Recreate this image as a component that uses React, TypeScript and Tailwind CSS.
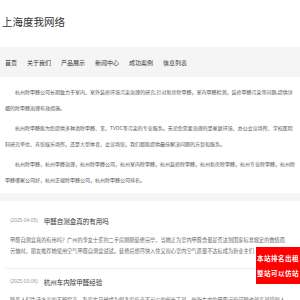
import React from "react";

const cjk = { fontFamily: '"Noto Sans CJK SC", "Noto Sans", sans-serif' };

const navItems = ["首页", "关于我们", "产品展示", "新闻中心", "成功案例", "信息列表"];

const news = [
  {
    date: "(2025-04-05)",
    title: "甲醛自测盒真的有用吗",
    summary:
      "甲醛自测盒真的有用吗？广州的李女士买的二手房刚刚装修完毕，当她正为室内甲醛含量是否达到国家标准规定的数值而苦恼时，朋友推荐她使用空气甲醛自测盒试试。装修后想尽快入住又担心室内空气质量不达标成为新业主们",
  },
  {
    date: "(2025-03-06)",
    title: "杭州车内除甲醛经验",
    summary:
      "随着人们生活水平的不断提高，私家车已经成为很多家庭必不可少的代步工具，但新车内的甲醛污染问题也越来越受到人们的关注。",
  },
];

export default function App() {
  return (
    <div className="w-[300px] min-h-[300px] bg-white text-[#333]" style={cjk}>
      <header className="h-[47px] flex items-center pl-[2px] pb-[4px]">
        <h1 className="text-[10.5px] leading-[14px] text-[#333] font-normal">上海度我网络</h1>
      </header>

      <nav className="h-[30px] bg-[#f5f5f5] flex items-center gap-[10px] pl-[5px] pt-[1px]">
        {navItems.map((n) => (
          <span key={n} className="text-[6px] leading-[8px] text-[#333]">
            {n}
          </span>
        ))}
      </nav>

      <section className="px-[5px] pt-[7px] pb-[5px] text-[5px] leading-[16px] text-[#555]">
        <p className="indent-[10px] mb-[4px]">
          杭州除甲醛公司长期致力于室内、室外装修环境污染治理的研究,针对新房除甲醛，室内甲醛检测，装修甲醛污染等问题,提供详细的除甲醛治理有效措施。
        </p>
        <p className="indent-[10px] mb-[4px]">
          杭州除甲醛能为您提供多种清除甲醛、苯、TVOC等污染的专业服务。无论您需要治理的是家庭环境、办公会议场所、学校医院科研究单位、宾馆娱乐场所，还是大型体育、会议场馆，我们都能提供最佳解决问题的方案和服务。
        </p>
        <p className="indent-[10px]">
          杭州除甲醛，杭州甲醛治理，杭州除甲醛公司，杭州室内除甲醛，杭州装修除甲醛，杭州新房除甲醛，杭州专业除甲醛，杭州除甲醛哪家公司好，杭州正规除甲醛公司，杭州除甲醛公司排名。
        </p>
      </section>

      <div className="h-[8px] bg-[#f5f5f5]" />

      <section className="px-[5px] pt-[7px]">
        {news.map((item, i) => (
          <div
            key={item.title}
            className={
              i === 0
                ? "border-b border-[#eeeeee] px-[5px] pt-[6px] pb-[12px]"
                : "px-[5px] pt-[6px] pb-[12px]"
            }
          >
            <div className="flex items-center h-[14px]">
              <span
                className="text-[4.8px] text-[#999] mr-[6px]"
                style={{ fontFamily: '"Liberation Sans", Arial, sans-serif' }}
              >
                {item.date}
              </span>
              <span className="text-[6.5px] leading-[14px] text-[#333]">{item.title}</span>
            </div>
            <p className="mt-[5.5px] text-[5.2px] leading-[11px] text-[#666]">{item.summary}</p>
          </div>
        ))}
      </section>

      <div className="fixed right-0 top-[247px] w-[44px] h-[37px] bg-[#ff0000] flex flex-col justify-center pl-[1px]">
        <span className="text-[6.5px] leading-[15px] font-bold text-white tracking-[0.5px] whitespace-nowrap">
          本站排名出租
        </span>
        <span className="text-[6.5px] leading-[15px] font-bold text-white tracking-[0.5px] whitespace-nowrap">
          整站可以仿站
        </span>
      </div>
    </div>
  );
}
